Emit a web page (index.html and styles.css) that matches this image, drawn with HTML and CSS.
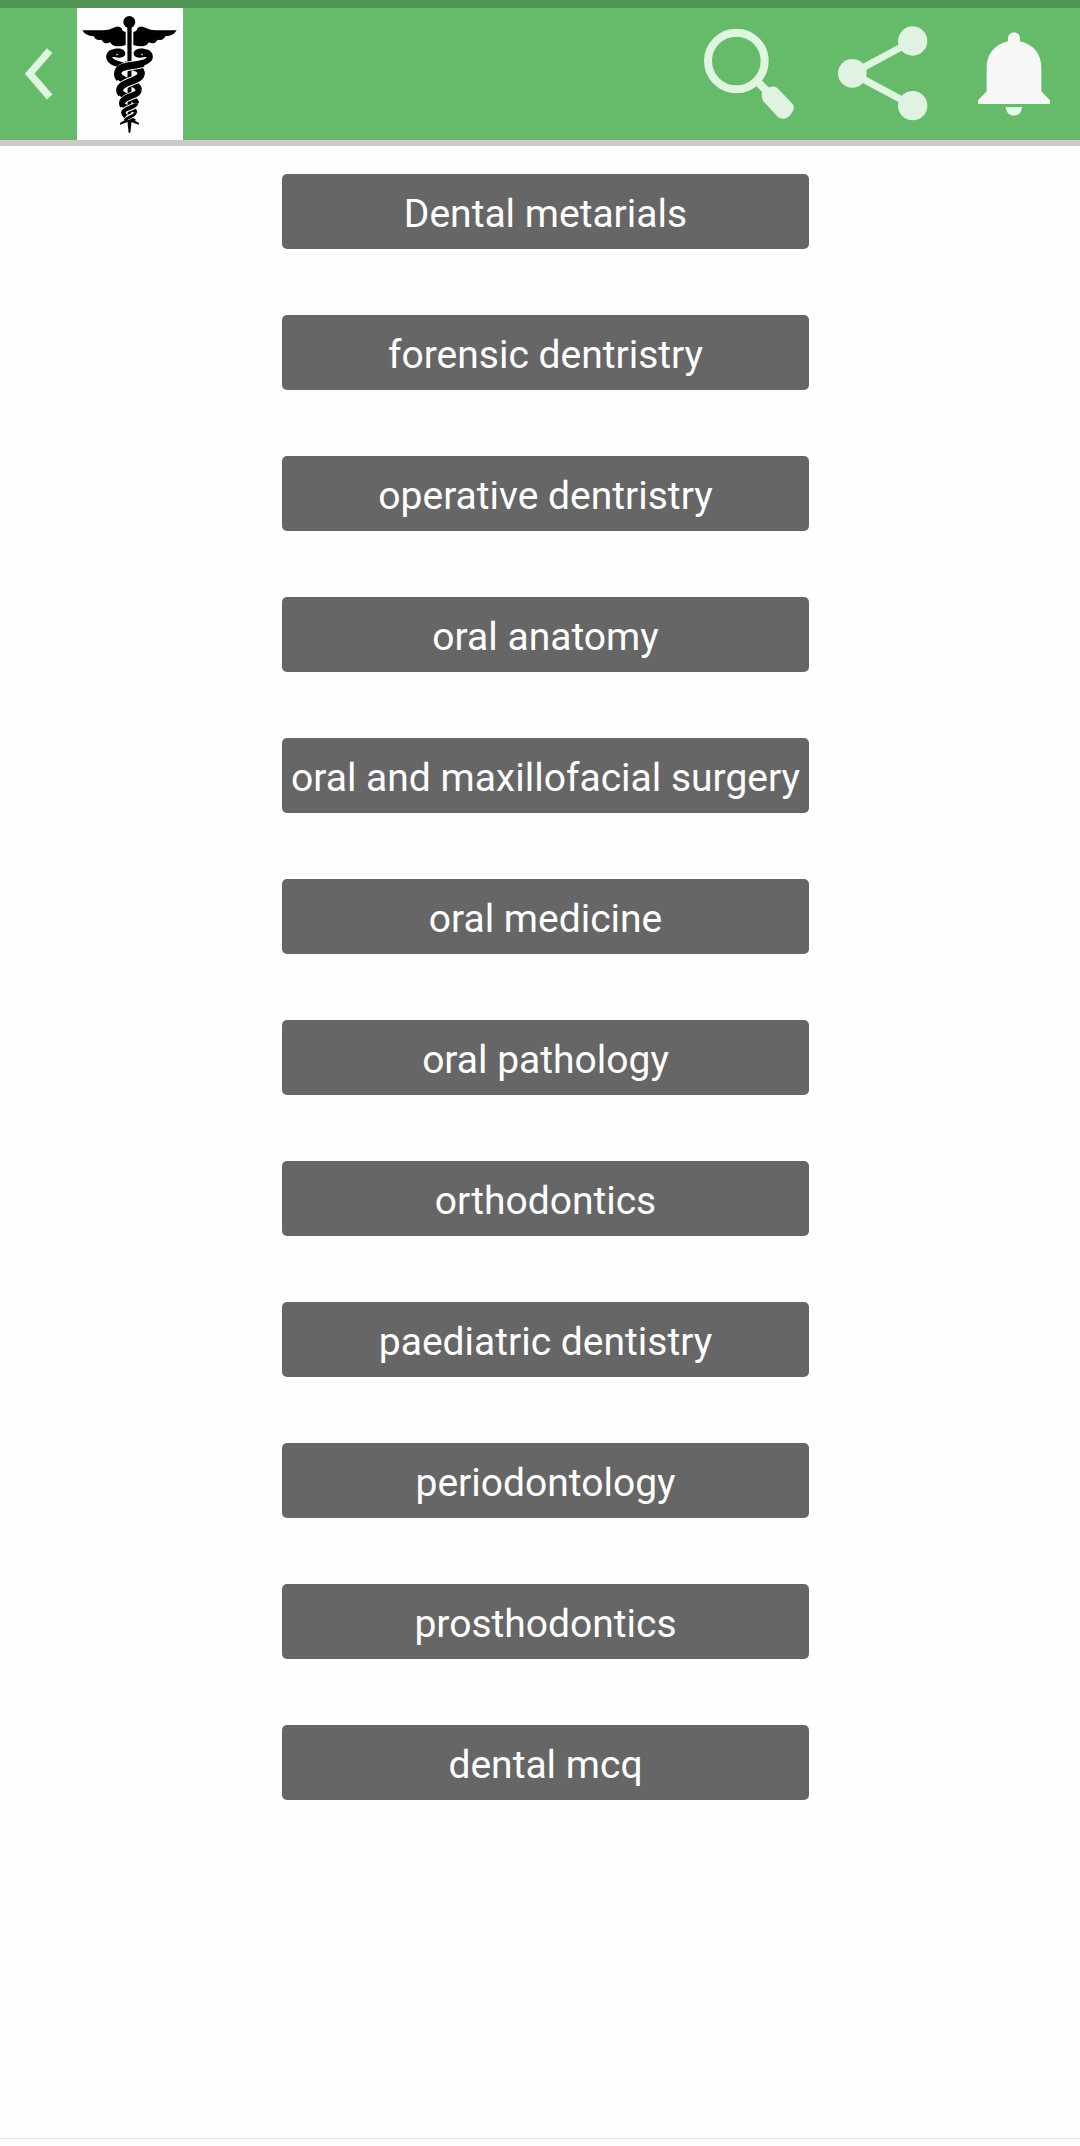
FILE: index.html
```html
<!DOCTYPE html>
<html lang="en">
<head>
<meta charset="utf-8">
<title>Dentistry</title>
<link rel="stylesheet" href="styles.css">
</head>
<body>
<div class="status-bar"></div>
<header class="app-bar">
  <button class="back" aria-label="Back">
    <svg width="77" height="132" viewBox="0 24 231 396"><path d="M149 152 L89 221 L149 291" fill="none" stroke="#def6df" stroke-width="22"/></svg>
  </button>
  <div class="logo">
    <svg width="106" height="132" viewBox="231 24 318 396">
      <circle cx="388" cy="66" r="18"/>
      <path d="M382 80H395L394 372L391 398H386L383 372Z"/>
      <path d="M247 91H309Q327 91 339 84Q356 74 365 85Q366 95 377 96V135Q362 140 345 138Q335 136 330 127Q314 136 304 119Q287 123 281 109Q256 108 247 91Z"/>
      <path d="M530 91H468Q450 91 438 84Q421 74 412 85Q411 95 400 96V135Q415 140 432 138Q442 136 447 127Q463 136 473 119Q490 123 496 109Q521 108 530 91Z"/>
      <g class="snake">
        <path stroke-width="18" d="M350 156C331 154 326 166 328 174C332 190 354 190 372 198"/>
        <path stroke-width="22" d="M372 194C402 203 422 200 424 222"/>
        <path stroke-width="20" d="M354 220C354 245 415 245 416 270"/>
        <path stroke-width="18" d="M359 270C359 290 408 290 408 310"/>
        <path stroke-width="14" d="M366 310C366 323 405 322 405 338"/>
        <path stroke-width="11" d="M370 337C370 352 392 351 404 363"/>
      </g>
      <path d="M343 147C358 143 376 149 376 160C376 170 366 174 357 173C347 173 341 169 335 172L333 160C341 166 352 168 355 163C348 160 339 158 343 147Z"/>
      <path d="M434 147C419 143 401 149 401 160C401 170 411 174 420 173C430 173 436 169 442 172L444 160C436 166 425 168 422 163C429 160 438 158 434 147Z"/>
      <g class="halo">
        <path stroke-width="28" d="M435 187C410 199 362 194 354 218"/>
        <path stroke-width="27" d="M424 224C421 243 370 243 361 267"/>
        <path stroke-width="24" d="M415 273C411 290 373 288 368 307"/>
        <path stroke-width="19" d="M408 311C405 323 377 323 372 334"/>
        <path stroke-width="15" d="M405 338C402 350 380 350 372 360"/>
      </g>
      <g class="snake">
        <path stroke-width="18" d="M427 156C446 154 451 166 449 174C445 184 435 186 425 190"/>
        <path stroke-width="22" d="M430 190C397 200 354 194 353 220Q353 230 358 235"/>
        <path stroke-width="21" d="M424 220C424 245 360 244 359 270Q359 277 363 282"/>
        <path stroke-width="18" d="M416 270C416 290 367 287 366 310Q366 314 369 318"/>
        <path stroke-width="13" d="M408 310C408 324 372 322 370 337Q370 344 377 350"/>
        <path stroke-width="9" d="M406 337C406 349 385 349 375 361"/>
      </g>
      <path d="M381 356L360 369V374L385 365ZM395 356L417 369V374L391 365Z"/>
    </svg>
  </div>
  <nav class="actions">
    <svg width="400" height="132" viewBox="0 24 1200 396">
      <g fill="none" stroke="#def6df">
        <circle cx="169" cy="183" r="85" stroke-width="24"/>
        <path d="M228 240L262 275" stroke-width="24"/>
        <path d="M517 220L698 123M517 220L698 317" stroke-width="21"/>
      </g>
      <path fill="#e0f2e1" d="M246 278Q245 271 253 268L271 261Q284 256 293 265L337 311Q346 321 337 336Q327 353 314 356Q302 358 293 350L252 306Q243 297 246 278Z"/>
      <g fill="#e0f2e1"><circle cx="517" cy="220" r="43"/><circle cx="698" cy="123" r="44"/><circle cx="698" cy="317" r="44"/></g>
      <path fill="#f6f7f6" d="M984 124V115A18 18 0 0 1 1020 115V124C1062 134 1084 164 1084 202V274L1110 301V312H894V301L920 274V202C920 164 942 134 984 124Z"/>
      <path fill="#e8fae8" d="M977 321H1026C1025 337 1015 347 1001 347C988 347 978 337 977 321Z"/>
    </svg>
  </nav>
</header>
<main class="topics">
  <button class="topic">Dental metarials</button>
  <button class="topic">forensic dentristry</button>
  <button class="topic">operative dentristry</button>
  <button class="topic">oral anatomy</button>
  <button class="topic">oral and maxillofacial surgery</button>
  <button class="topic">oral medicine</button>
  <button class="topic">oral pathology</button>
  <button class="topic">orthodontics</button>
  <button class="topic">paediatric dentistry</button>
  <button class="topic">periodontology</button>
  <button class="topic">prosthodontics</button>
  <button class="topic">dental mcq</button>
</main>
<footer class="bottom-edge"></footer>
</body>
</html>
```
FILE: styles.css
```css
* { box-sizing: border-box; }
body {
  margin: 0;
  height: 2146px;
  display: flex;
  flex-direction: column;
  background: #fefefe;
  font-family: Roboto, sans-serif;
}
svg { display: block; }
button { border: 0; padding: 0; background: none; font: inherit; }
.status-bar { height: 8px; background: #519657; }
.app-bar {
  display: flex;
  height: 138px;
  background: #66bb6a;
  border-bottom: 6px solid #c9cbc9;
}
.logo { width: 106px; background: #fefefe; }
.actions { margin-left: auto; }
.snake { fill: none; stroke: #000; }
.halo { fill: none; stroke: #fefefe; }
.topics {
  flex: 1;
  display: flex;
  flex-direction: column;
  align-items: center;
  gap: 66px;
  padding: 28px 0 0 11px;
}
.topic {
  width: 527px;
  height: 75px;
  padding-top: 5px;
  border-radius: 5px;
  background: #666;
  color: #fff;
  font-size: 39px;
  line-height: 70px;
  white-space: nowrap;
}
.bottom-edge { height: 8px; border-top: 1px solid #e4e4e4; }
```
